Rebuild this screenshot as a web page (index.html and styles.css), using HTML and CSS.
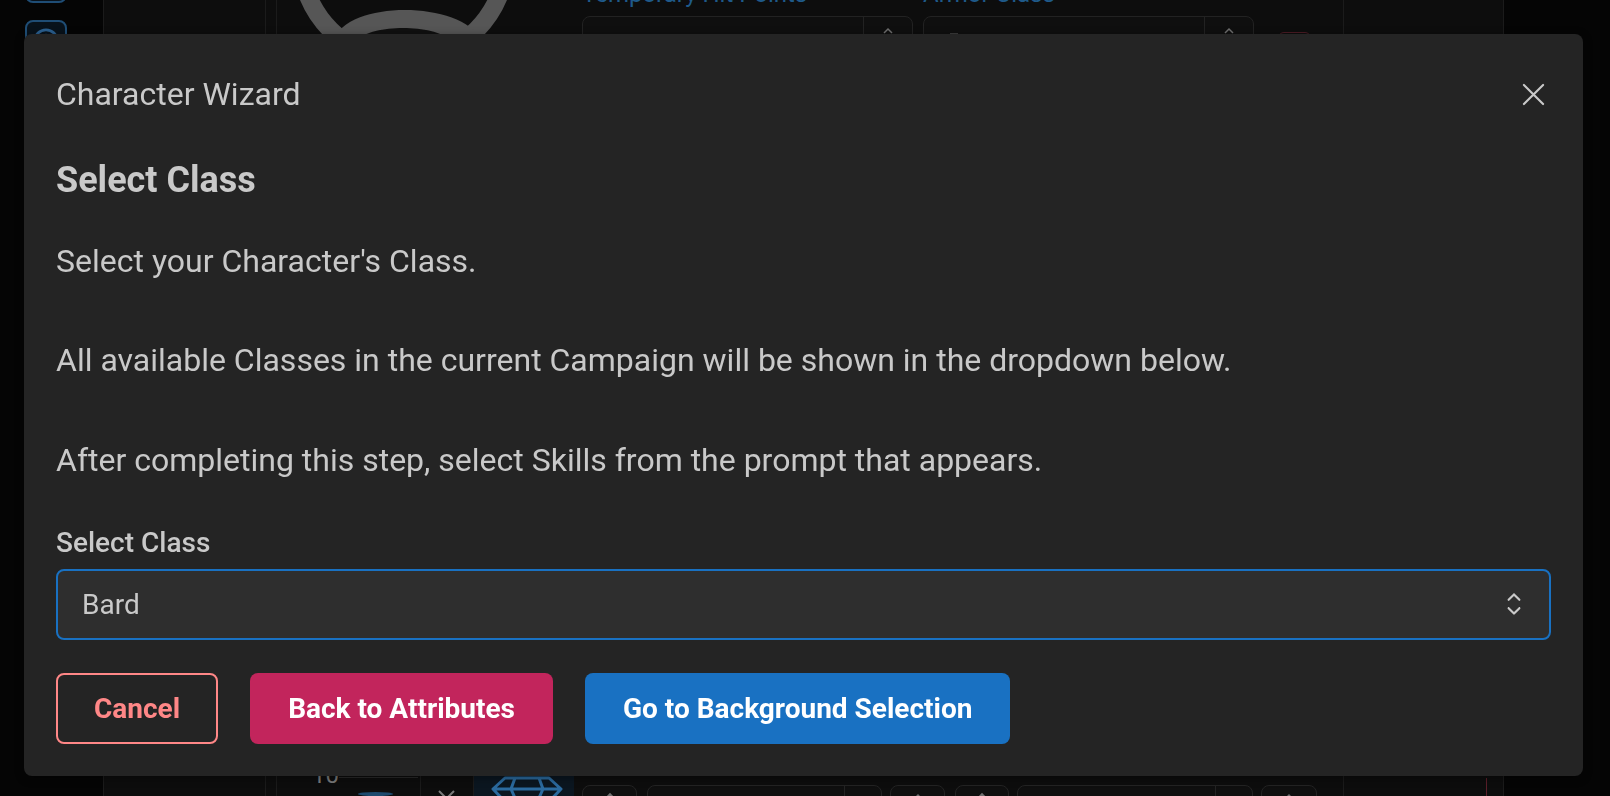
FILE: index.html
```html
<!DOCTYPE html>
<html lang="en">
<head>
<meta charset="utf-8">
<title>Character Wizard</title>
<link rel="stylesheet" href="styles.css">
</head>
<body>
<div class="app">
  <aside class="sidebar">
    <div class="side-btn side-btn-prev"></div>
    <div class="side-btn">
      <svg class="side-icon" viewBox="0 0 30 30"><circle cx="15" cy="15" r="12" fill="none" stroke="#2a5f8f" stroke-width="3"/><path d="M9 15 L15 9 L21 15" fill="none" stroke="#2a5f8f" stroke-width="3"/></svg>
    </div>
  </aside>
  <div class="content">
    <div class="col1"></div>
    <main class="sheet">
      <div class="sheet-top">
        <svg class="avatar" viewBox="300 0 207 40">
          <circle cx="403.5" cy="-42.7" r="103" fill="none" stroke="#565656" stroke-width="18"/>
          <path d="M334 40 C346 0 462 0 481 40 Z" fill="#565656"/>
          <path d="M357 40 C372 24 434 24 450 40 Z" fill="#101010"/>
        </svg>
        <div class="field field-hp">
          <div class="field-label">Temporary Hit Points</div>
          <div class="field-box">
            <div class="field-input"></div>
            <div class="field-spin"><svg class="spin-icon" viewBox="0 0 12 8"><path d="M2 6 L6 2 L10 6" fill="none" stroke="#6e6e6e" stroke-width="1.5"/></svg></div>
          </div>
        </div>
        <div class="field field-ac">
          <div class="field-label">Armor Class</div>
          <div class="field-box">
            <div class="field-input"><span class="tick"></span></div>
            <div class="field-spin"><svg class="spin-icon" viewBox="0 0 12 8"><path d="M2 6 L6 2 L10 6" fill="none" stroke="#6e6e6e" stroke-width="1.5"/></svg></div>
          </div>
        </div>
        <div class="red-chip"></div>
      </div>
      <div class="sheet-bottom">
        <div class="cell-a">
          <div class="cell-a-row">
            <span class="level-num">10</span>
            <span class="level-line"></span>
          </div>
          <span class="blue-dot"></span>
        </div>
        <div class="cell-b">
          <svg class="x-icon" viewBox="0 0 21 21"><path d="M3 3 L18 18 M18 3 L3 18" stroke="#7a7a7a" stroke-width="2"/></svg>
        </div>
        <div class="cell-c">
          <svg class="gem" viewBox="0 0 72 40"><path d="M14 3 H58 L70 14 L36 50 L2 14 Z M2 14 H70 M24 3 L20 14 L36 50 M48 3 L52 14 L36 50" fill="none" stroke="#2b6a9e" stroke-width="3" stroke-linejoin="round"/></svg>
        </div>
        <div class="mini-box b1"><svg class="mini-icon" viewBox="0 0 12 8"><path d="M2 6 L6 2 L10 6" fill="none" stroke="#707070" stroke-width="1.6"/></svg></div>
        <div class="mini-box wide b2"><span class="mini-sep"></span></div>
        <div class="mini-box b3"><svg class="mini-icon" viewBox="0 0 12 8"><path d="M1 7 L6 2 L11 7 Z" fill="#707070"/></svg></div>
        <div class="mini-box b4"><svg class="mini-icon" viewBox="0 0 12 8"><path d="M2 6 L6 2 L10 6" fill="none" stroke="#707070" stroke-width="1.6"/></svg></div>
        <div class="mini-box wide b5"><span class="mini-sep"></span></div>
        <div class="mini-box b6"><svg class="mini-icon" viewBox="0 0 12 8"><path d="M1 7 L6 2 L11 7 Z" fill="#707070"/></svg></div>
      </div>
    </main>
    <div class="col3"><span class="red-line"></span></div>
  </div>
  <div class="rest"></div>
</div>

<section class="dialog" role="dialog" aria-labelledby="dlg-title">
  <header class="dialog-header">
    <h2 class="dialog-title" id="dlg-title">Character Wizard</h2>
    <button class="close-btn" aria-label="Close">
      <svg class="close-icon" viewBox="0 0 24 24"><path d="M2 2 L22 22 M22 2 L2 22" stroke="#c9c9c9" stroke-width="2.2" stroke-linecap="round"/></svg>
    </button>
  </header>
  <div class="dialog-body">
    <h4 class="step-title">Select Class</h4>
    <p class="step-text">Select your Character's Class.</p>
    <p class="step-text">All available Classes in the current Campaign will be shown in the dropdown below.</p>
    <p class="step-text">After completing this step, select Skills from the prompt that appears.</p>
    <label class="select-label">Select Class</label>
    <div class="select">
      <span class="select-value">Bard</span>
      <span class="select-chevron">
        <svg viewBox="0 0 15 15" class="chevron-icon"><path d="M4.93179 5.43179C4.75605 5.60753 4.75605 5.89245 4.93179 6.06819C5.10753 6.24392 5.39245 6.24392 5.56819 6.06819L7.49999 4.13638L9.43179 6.06819C9.60753 6.24392 9.89245 6.24392 10.0682 6.06819C10.2439 5.89245 10.2439 5.60753 10.0682 5.43179L7.81819 3.18179C7.73379 3.0974 7.61933 3.04999 7.49999 3.04999C7.38064 3.04999 7.26618 3.0974 7.18179 3.18179L4.93179 5.43179ZM10.0682 9.56819C10.2439 9.39245 10.2439 9.10753 10.0682 8.93179C9.89245 8.75606 9.60753 8.75606 9.43179 8.93179L7.49999 10.8636L5.56819 8.93179C5.39245 8.75606 5.10753 8.75606 4.93179 8.93179C4.75605 9.10753 4.75605 9.39245 4.93179 9.56819L7.18179 11.8182C7.35753 11.9939 7.64245 11.9939 7.81819 11.8182L10.0682 9.56819Z" fill="#c9c9c9"/></svg>
      </span>
    </div>
    <div class="actions">
      <button class="btn btn-cancel">Cancel</button>
      <button class="btn btn-back">Back to Attributes</button>
      <button class="btn btn-next">Go to Background Selection</button>
    </div>
  </div>
</section>
</body>
</html>
```

FILE: styles.css
```css
* { box-sizing: border-box; }
html, body { margin: 0; padding: 0; }
body {
  width: 1610px;
  height: 796px;
  overflow: hidden;
  background: #050505;
  font-family: Roboto, "Liberation Sans", sans-serif;
}

/* ---------- background sheet ---------- */
.app {
  display: flex;
  height: 796px;
  overflow: hidden;
}
.sidebar {
  width: 103px;
  flex: none;
  display: flex;
  flex-direction: column;
  align-items: flex-start;
  padding-left: 25px;
  gap: 17px;
  background: #050505;
}
.side-btn {
  width: 42px;
  height: 42px;
  border: 2px solid #1f4d75;
  border-radius: 8px;
  background: #08121b;
  display: flex;
  justify-content: center;
  padding-top: 5px;
}
.side-btn-prev { margin-top: -39px; }
.side-icon { width: 28px; height: 28px; }

.content {
  display: flex;
  background: #0d0d0d;
  height: 796px;
}
.col1 {
  width: 163px;
  border-left: 1px solid #1b1b1b;
  border-right: 1px solid #1b1b1b;
}
.sheet {
  width: 1068px;
  margin-left: 10px;
  border-left: 1px solid #1b1b1b;
  border-right: 1px solid #1b1b1b;
  display: flex;
  flex-direction: column;
  justify-content: space-between;
}
.sheet-top {
  display: flex;
  align-items: flex-start;
  padding-left: 23px;
}
.avatar { width: 207px; height: 40px; flex: none; }
.field { flex: none; }
.field-hp { width: 331px; margin-left: 75px; }
.field-ac { width: 331px; margin-left: 10px; }
.field-label {
  margin-top: -18px;
  font-size: 24px;
  line-height: 24px;
  color: #1f5a8a;
  white-space: nowrap;
}
.field-box {
  margin-top: 10px;
  height: 60px;
  border: 1px solid #222;
  border-radius: 8px;
  display: flex;
  background: #0f0f0f;
}
.field-input { flex: 1; }
.tick {
  display: block;
  width: 8px;
  height: 2px;
  margin: 16px 0 0 26px;
  background: #3a3a3a;
}
.field-spin {
  width: 49px;
  border-left: 1px solid #222;
  display: flex;
  justify-content: center;
  padding-top: 10px;
}
.spin-icon { width: 12px; height: 8px; }
.red-chip {
  width: 33px;
  height: 30px;
  margin: 32px 0 0 24px;
  border: 1px solid #4a1b24;
  border-radius: 6px;
}

.sheet-bottom {
  height: 36px;
  display: flex;
  align-items: flex-start;
}
.cell-a {
  width: 144px;
  height: 36px;
  border-right: 1px solid #1b1b1b;
  display: flex;
  flex-direction: column;
}
.cell-a-row {
  display: flex;
  align-items: flex-start;
  padding-left: 35px;
}
.level-num {
  margin-top: 3px;
  font-size: 24px;
  line-height: 24px;
  color: #7a7a7a;
}
.level-line {
  width: 79px;
  height: 1px;
  margin-top: 17px;
  background: #2a2a2a;
}
.blue-dot {
  width: 35px;
  height: 35px;
  margin: 5px 0 0 81px;
  border-radius: 50%;
  background: #1d4a6e;
}
.cell-b {
  width: 53px;
  height: 36px;
  border-right: 1px solid #1b1b1b;
  padding: 28px 0 0 15px;
}
.x-icon { width: 21px; height: 21px; display: block; }
.cell-c {
  width: 100px;
  height: 36px;
  background: #0b1620;
  padding: 15px 0 0 17px;
}
.gem { width: 72px; height: 40px; display: block; }
.mini-box {
  height: 40px;
  margin-top: 25px;
  border: 1px solid #232323;
  border-radius: 8px;
  display: flex;
  justify-content: center;
  padding-top: 6px;
  background: #0f0f0f;
}
.mini-icon { width: 12px; height: 8px; }
.b1 { width: 55px; margin-left: 8px; }
.b2 { width: 235px; margin-left: 10px; }
.b3 { width: 55px; margin-left: 8px; }
.b4 { width: 54px; margin-left: 10px; }
.b5 { width: 236px; margin-left: 8px; }
.b6 { width: 56px; margin-left: 8px; }
.wide { justify-content: flex-end; padding: 0 36px 0 0; }
.mini-sep { width: 1px; height: 40px; background: #232323; }

.col3 {
  width: 160px;
  border-right: 1px solid #1b1b1b;
  display: flex;
  flex-direction: column;
  justify-content: flex-end;
}
.red-line {
  width: 1px;
  height: 18px;
  margin-left: 142px;
  background: #5a1e29;
}
.rest { flex: 1; background: #050505; }

/* ---------- dialog ---------- */
.dialog {
  position: fixed;
  top: 34px;
  left: 24px;
  width: 1559px;
  background: #242424;
  border-radius: 8px;
  color: #c9c9c9;
  box-shadow: 0 2px 10px rgba(0, 0, 0, 0.4);
}
.dialog-header {
  height: 120px;
  display: flex;
  align-items: center;
  justify-content: space-between;
  padding: 0 32px;
}
.dialog-title {
  margin: 0;
  font-size: 32px;
  font-weight: 400;
  line-height: 1;
  color: #c9c9c9;
}
.close-btn {
  width: 36px;
  height: 36px;
  padding: 0;
  border: 0;
  background: transparent;
  display: flex;
  align-items: center;
  justify-content: center;
}
.close-icon { width: 23px; height: 23px; }
.dialog-body { padding: 0 32px 32px; }
.step-title {
  margin: 0;
  font-size: 36px;
  font-weight: 700;
  line-height: 52.2px;
  color: #c9c9c9;
}
.step-text {
  margin: 31px 0 0;
  font-size: 32px;
  line-height: 49.6px;
}
.step-text + .step-text { margin-top: 49.6px; }
.select-label {
  display: block;
  margin: 36.1px 0 4px;
  font-size: 28px;
  font-weight: 500;
  line-height: 43.4px;
}
.select {
  height: 71px;
  border: 2px solid #1971c2;
  border-radius: 8px;
  background: #2e2e2e;
  padding-left: 24px;
  display: flex;
  align-items: center;
  justify-content: space-between;
}
.select-value { font-size: 28px; color: #c9c9c9; }
.select-chevron {
  width: 70px;
  display: flex;
  justify-content: center;
  align-items: center;
}
.chevron-icon { width: 36px; height: 36px; }
.actions {
  margin-top: 33px;
  display: flex;
  gap: 32px;
}
.btn {
  height: 71px;
  padding: 0 36px;
  border: 2px solid transparent;
  border-radius: 8px;
  font-family: Roboto, "Liberation Sans", sans-serif;
  font-size: 28px;
  font-weight: 700;
  color: #fff;
}
.btn-cancel { background: transparent; border-color: #ff8787; color: #ff8787; }
.btn-back { background: #c2255c; }
.btn-next { background: #1971c2; }
```
